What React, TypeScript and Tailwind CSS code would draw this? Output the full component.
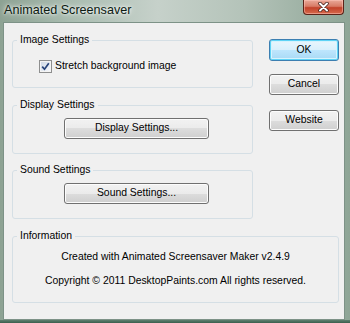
import React from "react";

const btn =
  "h-[21px] rounded-[3px] border border-[#707070] bg-[linear-gradient(to_bottom,#f2f2f2_0%,#ebebeb_50%,#dddddd_50%,#cfcfcf_100%)] shadow-[inset_0_0_0_1px_#fcfcfc] text-[10.4px] text-black flex items-center justify-center leading-none";

function Group({
  title,
  className,
  children,
}: {
  title: string;
  className?: string;
  children?: React.ReactNode;
}) {
  return (
    <fieldset
      className={
        "m-0 p-0 border border-[#d5dfe5] rounded-[3px] min-w-0 " + (className ?? "")
      }
    >
      <legend className="ml-[4px] px-[3px] leading-[14px] text-[10.4px] text-black">
        {title}
      </legend>
      {children}
    </fieldset>
  );
}

export default function App() {
  return (
    <div className="w-[350px] h-[323px] flex flex-col overflow-hidden bg-[linear-gradient(to_right,#8da293_0%,#a9bcb0_20%,#c6d1ca_45%,#b4c3b9_70%,#8ea596_100%)] font-['Liberation_Sans',Arial,sans-serif] text-[10.4px] text-black">
      {/* title bar */}
      <div className="h-[22px] flex shrink-0">
        <div className="pl-[4px] pt-[3px] text-[12.6px] leading-[15px] text-[#0c1a12] [text-shadow:0_0_6px_rgba(255,255,255,0.95),0_0_3px_rgba(255,255,255,0.9)]">
          Animated Screensaver
        </div>
        <div className="ml-auto mr-[6px] w-[41px] h-[15px] rounded-b-[4px] border border-t-0 border-[#5b2318] bg-[linear-gradient(to_bottom,#e9a999_0%,#d87b66_45%,#c2422a_55%,#d66a4c_100%)] shadow-[inset_0_0_0_1px_rgba(255,200,190,0.5)] flex items-center justify-center">
          <svg width="11" height="10" viewBox="0 0 11 10">
            <path
              d="M2 1.5 L9 8.5 M9 1.5 L2 8.5"
              stroke="#3a1a14"
              strokeWidth="3.4"
              strokeLinecap="round"
            />
            <path
              d="M2 1.5 L9 8.5 M9 1.5 L2 8.5"
              stroke="#ffffff"
              strokeWidth="2"
              strokeLinecap="round"
            />
          </svg>
        </div>
      </div>

      {/* client area */}
      <div className="ml-[3px] mr-[5px] h-[298px] border border-[#7d9287] bg-[#f0f0f0] flex flex-col">
        <div className="flex pt-[10px] pl-[8px]">
          <div className="w-[241px] flex flex-col">
            <Group title="Image Settings" className="h-[55px]">
              <div className="mt-[12px] pl-[26px] flex items-center h-[14px]">
                <div className="w-[13px] h-[13px] border border-[#8e8f8f] bg-[linear-gradient(to_bottom_right,#dcdcdc,#ffffff)] flex items-center justify-center shrink-0">
                  <div className="w-[11px] h-[11px] border border-[#f4f4f4] bg-[linear-gradient(to_bottom_right,#cfd9e6,#f6f8fb)] flex items-center justify-center">
                    <svg width="9" height="9" viewBox="0 0 9 9">
                      <path
                        d="M1.2 4.6 L3.5 7.2 L7.8 1.2"
                        fill="none"
                        stroke="#27447a"
                        strokeWidth="1.7"
                      />
                    </svg>
                  </div>
                </div>
                <span className="ml-[3px] leading-[14px]">Stretch background image</span>
              </div>
            </Group>
            <Group title="Display Settings" className="h-[56px] mt-[10px]">
              <div className="mt-[6px] pl-[51px]">
                <button className={btn + " w-[145px]"}>Display Settings...</button>
              </div>
            </Group>
            <Group title="Sound Settings" className="h-[56px] mt-[9px]">
              <div className="mt-[6px] pl-[51px]">
                <button className={btn + " w-[145px]"}>Sound Settings...</button>
              </div>
            </Group>
          </div>
          <div className="ml-[16px] w-[70px] flex flex-col">
            <button className="mt-[6px] h-[22px] rounded-[3px] border border-[#3c7fb1] bg-[linear-gradient(to_bottom,#eaf6fd_0%,#d9f0fc_50%,#bee6fd_50%,#a7d9f5_100%)] shadow-[inset_0_0_0_1px_#5fd3f6,inset_0_0_0_2px_#d6f3fd] text-[10.4px] flex items-center justify-center leading-none">
              OK
            </button>
            <button className={btn + " mt-[13px]"}>Cancel</button>
            <button className={btn + " mt-[15px]"}>Website</button>
          </div>
        </div>
        <div className="pl-[8px]">
          <Group title="Information" className="mt-[10px] h-[74px] w-[327px]">
            <div className="mt-[7px] text-center leading-[14px]">
              Created with Animated Screensaver Maker v2.4.9
            </div>
            <div className="mt-[10px] text-center leading-[14px]">
              Copyright © 2011 DesktopPaints.com All rights reserved.
            </div>
          </Group>
        </div>
      </div>
      <div className="flex-1 bg-[linear-gradient(to_bottom,#5f8070,#3b5f4e)]" />
    </div>
  );
}
